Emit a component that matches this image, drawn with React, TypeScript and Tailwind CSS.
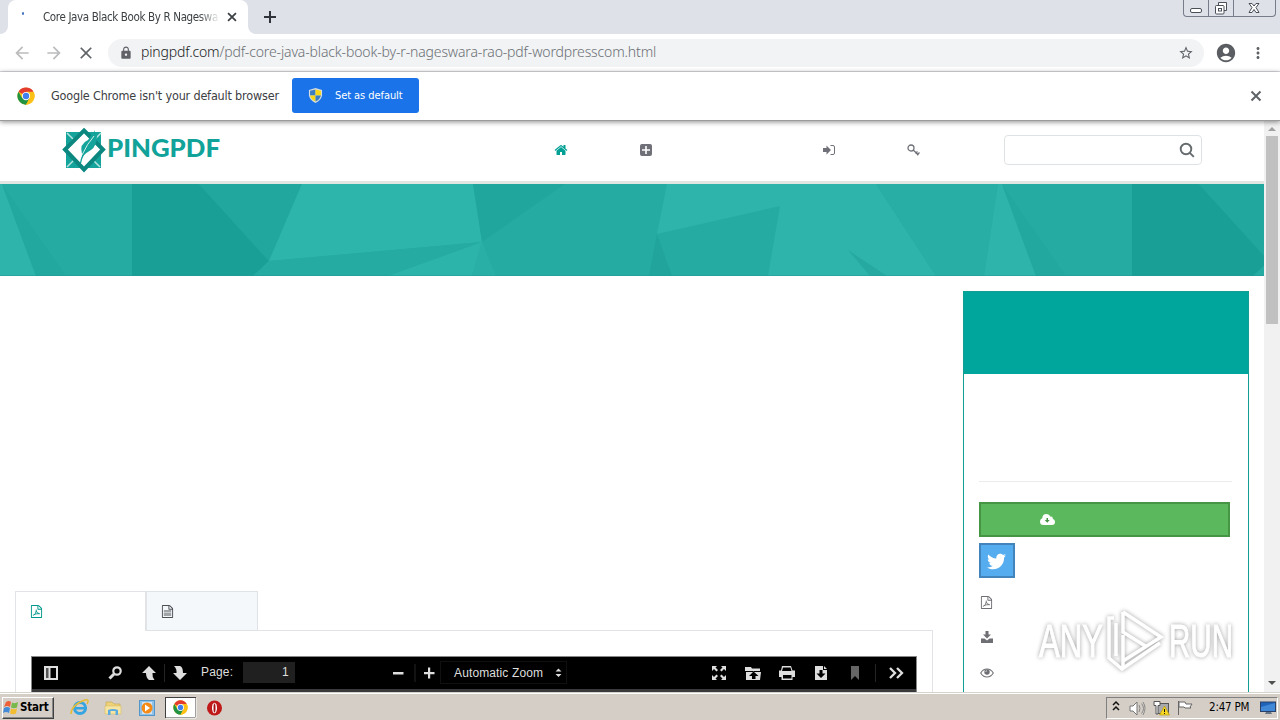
import React from 'react';
import { MdLock, MdStarBorder, MdAccountCircle, MdMoreVert, MdClose, MdArrowBack, MdArrowForward } from 'react-icons/md';
import { FaTwitter } from 'react-icons/fa';

const ui = "font-['DejaVu_Sans_Condensed','DejaVu_Sans',sans-serif] [font-stretch:condensed]";

type P = { d: string; className?: string };
const Glyph = ({ d, className }: P) => (
  <svg viewBox="0 0 1792 1792" className={className} fill="currentColor"><path d={d} /></svg>
);

const HOME = 'M1472 992v480q0 26-19 45t-45 19h-384v-384h-256v384h-384q-26 0-45-19t-19-45v-480q0-1 .5-3t.5-3l575-474 575 474q1 2 1 6zm223-69l-62 74q-8 9-21 11h-3q-13 0-21-7l-692-577-692 577q-12 8-24 7-13-2-21-11l-62-74q-8-10-7-23.5t11-21.5l719-599q32-26 76-26t76 26l244 204v-195q0-14 9-23t23-9h192q14 0 23 9t9 23v408l219 182q10 8 11 21.5t-7 23.5z';
const PAGE = 'M1596 380q28 28 48 76t20 88v1152q0 40-28 68t-68 28h-1344q-40 0-68-28t-28-68v-1600q0-40 28-68t68-28h896q40 0 88 20t76 48zm-444-244v376h376q-10-29-22-41l-313-313q-12-12-41-22zm384 1528v-1024h-416q-40 0-68-28t-28-68v-416h-768v1536h1280z';
const LINES = 'M384 800q0-32 32-32h960q32 0 32 32v64q0 32-32 32h-960q-32 0-32-32zM384 1056h1024v128h-1024zM384 1312h1024v128h-1024z';

const Pdf = ({ className }: { className: string }) => (
  <svg viewBox="0 0 1792 1792" className={className} fill="currentColor">
    <path d={PAGE} />
    <path d="M820 620q70 10 50 140-20 420-420 700M850 800q80 330 500 420M480 1360q350-200 820-170" fill="none" stroke="currentColor" strokeWidth="125" />
  </svg>
);

const Cross = ({ className }: { className: string }) => (
  <svg viewBox="0 0 16 16" className={className} fill="none" stroke="currentColor" strokeWidth="2"><path d="m3.500 3.500 9 9M12.500 3.500l-9 9" /></svg>
);

const ChromeLogo = ({ className }: { className: string }) => (
  <svg viewBox="0 0 48 48" className={className}>
    <circle cx="24" cy="24" r="23" fill="#fbc116" />
    <path d="M24 24 4.1 12.5A23 23 0 0 1 43.9 12.5L24 12.500Z" fill="#e33b2e" />
    <path d="M4.100 12.500A23 23 0 0 0 24 47L34 29.700 14 29.700Z" fill="#229342" />
    <path d="M24 13.500H44.400A23 23 0 0 1 24 47L33.500 29.500Z" fill="#fbc116" />
    <circle cx="24" cy="24" r="11" fill="#fff" />
    <circle cx="24" cy="24" r="8.500" fill="#4080ee" />
  </svg>
);

const Shield = () => (
  <svg viewBox="0 0 16 18" className="h-[17px] w-[15px]">
    <path d="M8 1 15 3V9Q14 14 8 17 2 14 1 9V3Z" fill="#d7dde0" />
    <path d="M8 2.500V9H2.200V4Z" fill="#3b7dc4" /><path d="M8 2.500V9h5.800V4Z" fill="#f7d716" />
    <path d="M2.200 9H8v6.500Q3.500 13.500 2.200 9Z" fill="#f7d716" /><path d="M13.800 9H8v6.500Q12.500 13.500 13.800 9Z" fill="#3b7dc4" />
  </svg>
);

function TabStrip() {
  return (
    <div className="flex h-[34px] shrink-0 items-start bg-[#dee1e8]">
      <div className="flex h-[34px] w-2 shrink-0 items-end bg-white"><div className="h-[34px] w-2 rounded-br-lg bg-[#dee1e8]" /></div>
      <div className="flex h-[34px] w-[240px] shrink-0 items-center rounded-t-lg bg-white">
        <div className="mb-2 ml-[14px] h-[3px] w-[2px] rounded bg-[#4a78c0]" />
        <div className={`${ui} ml-[19px] w-[177px] text-[11.500px] leading-[16px] tracking-[-0.36px] whitespace-nowrap text-[#3c4043] [mask-image:linear-gradient(to_right,#000_88%,transparent)]`}>
          Core Java Black Book By R Nageswa
        </div>
        <Cross className="ml-[5px] h-[14px] w-[14px] text-[#3c4043]" />
      </div>
      <div className="h-[34px] w-2 shrink-0 bg-white"><div className="h-[34px] w-2 rounded-bl-lg bg-[#dee1e8]" /></div>
      <svg viewBox="0 0 18 18" className="mt-2 ml-[5px] h-[18px] w-[18px]" stroke="#30343a" strokeWidth="2"><path d="M9 3v12M3 9h12" /></svg>
      <div className="mr-[4px] ml-auto flex h-[17px] w-[93px] rounded-b-[4px] border border-t-0 border-[#777c8a]">
        <svg viewBox="0 0 91 16" className="h-4 w-[91px]" fill="none" stroke="#4b5058">
          <path d="M24.500 0V16M49.500 0V16" stroke="#777c8a" />
          <rect x="6.500" y="8.500" width="11" height="4" rx="1.500" fill="#fff" />
          <path d="M34.500 5.500V2.500H42.500V10.500H40" fill="#fff" /><rect x="31.500" y="5.500" width="8.500" height="8.500" rx="1" fill="#fff" /><rect x="34.500" y="8.500" width="3" height="2.500" />
          <path d="M65 3.500h3l2 2.500 2-2.500h3l-3 4 3 5h-3l-2-3-2 3h-3l3-5Z" fill="#fff" />
        </svg>
      </div>
    </div>
  );
}

function Toolbar() {
  return (
    <div className="flex h-[38px] shrink-0 items-center border-b border-[#dadce0] bg-white">
      <MdArrowBack className="ml-3 h-5 w-5 text-[#babcbe]" />
      <MdArrowForward className="ml-3 h-5 w-5 text-[#babcbe]" />
      <MdClose className="ml-3 h-5 w-5 text-[#5f6368]" />
      <div className="ml-[12px] flex h-7 w-[1096px] items-center rounded-full bg-[#f1f3f4]">
        <MdLock className="ml-[11px] h-[14px] w-[14px] shrink-0 text-[#5f6368]" />
        <div className="-mt-[2px] ml-[8px] font-['Noto_Sans',sans-serif] text-[14px] leading-5 font-light tracking-[-0.143px] whitespace-nowrap text-[#6b6f74]">
          <span className="text-[#202124]">pingpdf.com</span>/pdf-core-java-black-book-by-r-nageswara-rao-pdf-wordpresscom.html
        </div>
        <MdStarBorder className="mr-[10px] ml-auto h-4 w-4 text-[#5f6368]" />
      </div>
      <MdAccountCircle className="ml-[11px] h-[22px] w-[22px] text-[#5a5d62]" />
      <MdMoreVert className="ml-[12px] h-[18px] w-[18px] text-[#5f6368]" />
    </div>
  );
}

function InfoBar() {
  return (
    <div className="z-10 flex h-[49px] shrink-0 items-center border-b border-[#9b9b9b] bg-white shadow-[0_1px_5px_rgba(0,0,0,0.45)]">
      <ChromeLogo className="ml-[17px] h-[18px] w-[18px]" />
      <div className={`${ui} ml-4 w-[229px] text-[12.500px] tracking-[-0.18px] whitespace-nowrap text-[#3c4043]`}>Google Chrome isn't your default browser</div>
      <div className={`${ui} mb-[2px] ml-[12px] flex h-[35px] w-[127px] items-center rounded-[3px] bg-[#1a73e8] text-[11px] tracking-[-0.07px] whitespace-nowrap text-white`}>
        <span className="mr-3 ml-4"><Shield /></span><span className="mt-[2px]">Set as default</span>
      </div>
      <Cross className="mr-[16px] ml-auto h-4 w-4 text-[#5f6368]" />
    </div>
  );
}

function SiteHeader() {
  return (
    <header className="flex h-[63px] shrink-0 items-center border-b-[3px] border-[#e2e6e3] bg-white pb-[3px]">
      <svg viewBox="0 0 160 46" className="ml-[62px] h-[46px] w-[160px] shrink-0">
        <rect x="4" y="5" width="35" height="36" fill="#14a49b" />
        <path d="M5 6l7 7M39 6l-7 7M5 40l7-7M38 40l-7-7" stroke="#b5e4df" strokeWidth="1.500" />
        <path d="M22 3.500 41 22.500 22 42.500 3 22.500Z" fill="#fff" stroke="#0c8780" strokeWidth="4" />
        <path d="M18.500 36Q20 27 29 16" fill="none" stroke="#14a49b" strokeWidth="1.400" />
        <path d="M20 27Q17 17 26 13L33 3Q31 10 35 8 35 19 29 23 25 25 20 30Z" fill="#14a49b" />
        <path d="M20 28Q25 17 32 9" fill="none" stroke="#d4efed" />
        <text x="45" y="30" fontFamily="Lato, sans-serif" fontWeight="900" fontSize="24.500" textLength="113" lengthAdjust="spacingAndGlyphs" fill="#11a399">PINGPDF</text>
      </svg>
      <nav className="ml-[332px] flex w-[366px] shrink-0 items-center text-[#707178]">
        <Glyph d={HOME} className="h-[14px] w-[14px] text-[#00a095]" />
        <svg viewBox="0 0 12 12" className="ml-[72px] h-3 w-3"><rect width="12" height="12" rx="2" fill="currentColor" /><path d="M6 2v8M2 6h8" stroke="#fff" strokeWidth="1.600" /></svg>
        <svg viewBox="0 0 12 12" className="ml-[171px] h-3 w-3"><path d="M0 4h3.500V1.500L8 6 3.500 10.500V8H0Z" fill="currentColor" /><path d="M7.500 1.500H10q1.500 0 1.500 1.500v6q0 1.500-1.500 1.500H7.500" fill="none" stroke="currentColor" /></svg>
        <svg viewBox="0 0 13 12" className="ml-[72px] h-3 w-[13px]" fill="none" stroke="currentColor" strokeWidth="1.300"><circle cx="4" cy="4" r="3" /><path d="M6.200 6 11.500 11M8.500 9.500l2-2M10 11l2.500-2.500" /></svg>
      </nav>
      <div className="ml-[84px] flex h-[30px] w-[198px] items-center justify-end rounded-[4px] border border-[#dfe2e4] pr-[6px]">
        <svg viewBox="0 0 16 16" className="h-4 w-4" fill="none" stroke="#666b6e" strokeWidth="1.900"><circle cx="7" cy="7" r="5.300" /><path d="m10.800 10.800 4 4" /></svg>
      </div>
    </header>
  );
}

const tile = (
  <>
    <path d="M-2 0H2L36 92H-16Z" fill="#2eb4aa" />
    <path d="M2 0 66 92H36Z" fill="#23a89f" />
    <path d="M132 0H199L269 77 253 92H132Z" fill="#1a9f96" />
    <path d="M199 0H302L269 77Z" fill="#22a79f" />
    <path d="M302 0H473L482 58 269 77Z" fill="#2eb5ab" />
    <path d="M269 77 482 58 388 92H253Z" fill="#26aba2" />
    <path d="M388 92 482 58 472 92Z" fill="#2db4aa" />
    <path d="M472 92 482 58 496 92Z" fill="#2aafa6" />
    <path d="M473 0H565L482 58Z" fill="#21a69d" />
    <path d="M667 0H876L936 92H768L780 22 657 50Z" fill="#2eb4ab" />
    <path d="M657 50 672 92H649Z" fill="#20a49b" />
    <path d="M848 66 887 92H870Z" fill="#26a9a0" />
    <path d="M876 0H998L984 92H936Z" fill="#29aea5" />
  </>
);

function Banner() {
  return (
    <div className="h-[92px] shrink-0 overflow-hidden bg-[#26aba2]">
      <svg viewBox="0 0 1264 92" className="h-[92px] w-[1264px]">{tile}<g transform="translate(1000)">{tile}</g><path d="M0 91.500H1264" stroke="#1e9b92" strokeOpacity=".5" /></svg>
    </div>
  );
}

function Viewer() {
  return (
    <div className="mt-[25px] ml-[15px] h-[50px] w-[886px] border border-b-0 border-[#888]">
      <div className="flex h-8 items-center bg-black font-['Liberation_Sans',sans-serif] text-[12px] text-[#dedede]">
        <svg viewBox="0 0 884 32" className="h-8 w-[884px]" fill="#dedede">
          <path fillRule="evenodd" d="M12 9h14v14H12ZM18.500 11V21H24V11Z" /><path d="M14 11h2.500v10H14Z" fill="#555" />
          <circle cx="85" cy="14" r="3.700" fill="none" stroke="#dedede" strokeWidth="2.200" /><path d="m82 17-4.500 4.500" stroke="#dedede" strokeWidth="3" />
          <path d="M117 9 124 16H120.500Q120 20 122.500 23H117Q114 21 114 16H110Z" />
          <path d="M148 23 155 16H151Q151 10 148 9H142Q145 12 144.500 16H141Z" />
          <path d="M132.500 7V25M383 7V25M843.500 7V25" stroke="#242424" />
          <rect x="211" y="5" width="52" height="21" fill="#202020" />
          <text x="169" y="19" fontSize="12" textLength="32">Page:</text>
          <text x="250" y="19" fontSize="12">1</text>
          <path d="M361 15h10.500v2.500H361ZM392 15h10.500v2.300H392ZM396 10.500h2.200v11H396Z" />
          <rect x="408.500" y="4.500" width="126" height="22" fill="none" stroke="#101010" />
          <text x="422" y="20" fontSize="12" textLength="89">Automatic Zoom</text>
          <path d="M523.500 14.500 526.500 11.500 529.500 14.500ZM523.500 17 526.500 20 529.500 17Z" />
          <path d="M680 9h5l-1.500 1.500 2.500 2.500-1.500 1.500-2.500-2.500L680 14ZM694 9h-5l1.500 1.500L688 13l1.500 1.500 2.500-2.500 2 2ZM680 23h5l-1.500-1.500L686 19l-1.500-1.500L682 20l-2-2ZM694 23h-5l1.500-1.500L688 19l1.500-1.500L692 20l2-2Z" />
          <path fillRule="evenodd" d="M713 10h6l1 1.500h8V14H713ZM714 15h15l-1 8H714ZM721.500 14.500 717 19h3v3h3.500v-3h3Z" />
          <path d="M750 9h9l1.500 4.500H763V20h-2.500v3h-11v-3H747v-6.500h2ZM751 10.500 750 14h9.500l-1-3.500ZM751 18v3.500h8.500V18Z" fillRule="evenodd" />
          <path fillRule="evenodd" d="M783 9h8v4h4v10H783ZM792 9l3 3h-3ZM787.500 13h3v3.500h3L789 21l-4.500-4.500h3Z" />
          <path d="M819 9h8v14l-4-4-4 4Z" fill="#666" />
          <path d="m858 11 5 5-5 5M865 11l5 5-5 5" fill="none" stroke="#dedede" strokeWidth="2.300" />
        </svg>
      </div>
      <div className="h-5 bg-[#3a3a3a]" />
    </div>
  );
}

function DocumentColumn() {
  return (
    <div className="ml-[15px] flex w-[918px] shrink-0 flex-col pt-[315px]">
      <div className="z-[1] -mb-px flex h-10">
        <div className="flex h-10 w-[132px] items-center border-t border-r-2 border-l border-[#e1e3e6] bg-white pl-[14px]"><Pdf className="h-[13px] w-[13px] text-[#00978c]" /></div>
        <div className="flex h-10 w-[111px] items-center border border-l-0 border-[#dfe3e7] bg-[#f4f8fb] pl-[14px]">
          <svg viewBox="0 0 1792 1792" className="h-[13px] w-[13px]" fill="#4c5055"><path d={PAGE} /><path d={LINES} /></svg>
        </div>
      </div>
      <div className="h-[80px] border border-[#e1e3e6]"><Viewer /></div>
    </div>
  );
}

function Watermark() {
  return (
    <svg viewBox="0 0 230 76" className="pointer-events-none absolute top-[604px] left-[1030px] z-30 h-[76px] w-[230px] drop-shadow-[0_0_2px_rgba(0,0,0,0.38)]" fill="#fff">
      <g fontFamily="Liberation Sans, sans-serif" fontSize="46" fill="#fff" stroke="#fff" strokeWidth="1">
        <text x="9" y="53" textLength="64" lengthAdjust="spacingAndGlyphs">ANY</text>
        <text x="139" y="53" textLength="64" lengthAdjust="spacingAndGlyphs">RUN</text>
      </g>
      <path d="M93 8 131 33 93 57M93 8V28L117 43M84 14H79V54L92 65 130 39M86 19V52M93 31V63" fill="none" stroke="#fff" strokeWidth="3.500" />
    </svg>
  );
}

function Sidebar() {
  return (
    <aside className="mt-[15px] ml-[30px] h-[401px] w-[286px] shrink-0 border border-b-0 border-[#10a093]">
      <div className="h-[82px] bg-[#00a59b]" />
      <div className="flex flex-col px-[15px] text-[#6e6f74]">
        <div className="mt-[107px] h-px w-[253px] bg-[#e9ebed]" />
        <div className="mt-5 flex h-[35px] w-[251px] items-center border-2 border-[#459545] bg-[#5cb85c] pl-[59px]">
          <svg viewBox="0 0 15 11" className="h-[11px] w-[15px]"><path d="M3.500 11Q0 11 0 7.500 0 5 2.200 4.300 2.500 0 6.500 0 9.500 0 10.500 2.700 12.500 2 13 5 15 5.600 15 8 15 11 12 11Z" fill="#fff" /><path d="M6.500 4h1.500v2h1.700L7.200 8.700 4.800 6h1.700Z" fill="#459545" /></svg>
        </div>
        <div className="mt-[6px] flex h-[35px] w-9 items-center justify-center border-2 border-[#4384bd] bg-[#55acee]"><FaTwitter className="mt-[2px] mr-[2px] h-[19px] w-[19px] text-white" /></div>
        <Pdf className="mt-[18px] ml-px h-[13px] w-[13px]" />
        <svg viewBox="0 0 12 12" className="mt-[22px] ml-[2px] h-3 w-3" fill="currentColor"><path d="M4.500 0h3v3.500H10L6 7.500 2 3.500h2.500ZM0 7.500h3.500L6 9.500l2.500-2H12V12H0Z" /></svg>
        <svg viewBox="0 0 14 10" className="mt-[25px] ml-[1px] h-[10px] w-[14px]" fill="none" stroke="currentColor"><path d="M.7 5Q3 1 7 1T13.300 5Q11 9 7 9T.7 5Z" strokeWidth="1.100" /><circle cx="7" cy="4" r="2.700" fill="currentColor" stroke="none" /><path d="M5.700 4Q5.700 2.700 7 2.700" stroke="#fff" strokeWidth=".6" /></svg>
      </div>
    </aside>
  );
}

function Scrollbar() {
  return (
    <div className="flex w-4 shrink-0 flex-col items-center bg-[#f1f1f1]">
      <svg viewBox="0 0 16 15" className="h-[15px] w-4"><path d="M4 10 8 6l4 4Z" fill="#a0a0a0" /></svg>
      <div className="h-[188px] w-3 bg-[#c1c1c1]" />
      <svg viewBox="0 0 16 17" className="mt-auto h-[17px] w-4"><path d="M4 6h8l-4 4Z" fill="#505050" /></svg>
    </div>
  );
}

function Taskbar() {
  return (
    <div className={`${ui} z-20 flex h-7 shrink-0 items-center border-t border-[#d6d3ca] bg-[#d5cec7] shadow-[inset_0_1px_0_#fff]`}>
      <div className="mt-[2px] ml-[2px] flex h-[22px] w-[52px] items-center border border-t-white border-r-[#404040] border-b-[#404040] border-l-white text-[11.500px] font-bold text-black shadow-[inset_-1px_-1px_0_#888]">
        <svg viewBox="0 0 16 16" className="mr-px h-4 w-4 shrink-0"><path d="M3 2Q6 0 8 2L7 7Q4 5 1 7Z" fill="#ed6038" /><path d="M9 2.500Q12 4 15 2L14 7.500Q11 9 8 7.500Z" fill="#79b84a" /><path d="M1 8Q4 6 7 8L6 13Q3 11 0 13Z" fill="#438bd6" /><path d="M8 8.500Q11 10 14 8.500L13 13.500Q10 15 7 13.500Z" fill="#f3bd31" /></svg>
        <span className="tracking-[-0.2px]">Start</span>
      </div>
      <svg viewBox="0 0 170 28" className="ml-[10px] h-7 w-[170px] shrink-0">
        <circle cx="16" cy="15" r="5.500" fill="none" stroke="#34a5e1" strokeWidth="3" /><path d="M11 14h12v2.500H11Z" fill="#34a5e1" /><path d="M7 21Q7 12 21 7q5-1 2 4" fill="none" stroke="#e3bb39" strokeWidth="1.500" />
        <path d="M42 9h6l2 2h6v5H42Z" fill="#eed277" stroke="#c6a956" strokeWidth=".7" /><path d="M41 13h16v8H41Z" fill="#f6e5a1" stroke="#d9bd68" strokeWidth=".6" /><path d="M44 22V17q5-2 10 0v5h-2.500v-4h-5v4Z" fill="#5cabe0" />
        <rect x="75.500" y="7.500" width="15" height="15" fill="#8fc2e8" stroke="#5596ca" /><rect x="78" y="9" width="10" height="12" fill="#d2e4f2" /><circle cx="83" cy="15" r="5.500" fill="#f58a17" /><path d="m81 11.500 5 3.500-5 3.500Z" fill="#fff" />
        <rect x="101.500" y="4.500" width="30" height="20" fill="#fff" stroke="#404040" /><path d="M102 25h30V5" fill="none" stroke="#fff" />
        <circle cx="150.500" cy="15" r="7.500" fill="#c01919" /><ellipse cx="150.500" cy="15" rx="2.500" ry="5.300" fill="#fff" /><ellipse cx="150.500" cy="15" rx="1" ry="4.500" fill="#a50f13" />
        <svg x="109" y="7" width="15" height="15"><ChromeLogo className="h-[15px] w-[15px]" /></svg>
      </svg>
      <div className="mt-[3px] mr-[2px] ml-auto flex h-[22px] w-[172px] items-center border border-t-[#808080] border-r-white border-b-white border-l-[#808080]">
        <svg viewBox="0 0 90 20" className="h-5 w-[90px] shrink-0" fill="none" stroke="#111">
          <path d="m6 7 3-3 3 3M6 12l3-3 3 3" strokeWidth="1.500" />
          <path d="M23 8h3l4-4v13l-4-4h-3Z" fill="#fff" stroke="#777" /><path d="M32 7q2 3 0 7M34.500 5.500q4 5 0 10M36 4q4 6 0 13" stroke="#888" />
          <rect x="50.500" y="5.500" width="11" height="10" fill="#a8aaae" stroke="#555" /><path d="M47 3.500h6v4h-2V16h-2V7.500h-2Z" fill="#fff" stroke="#555" /><path d="m57.500 8 5 9h-10Z" fill="#f8d820" stroke="#b79b12" strokeWidth=".7" /><path d="M57.500 11v3M57.500 15v1" />
          <path d="M71.500 3v14M72 4h6l1 2h6l-2 3 1 1h-6l-1-1h-5Z" fill="#fff" stroke="#666" />
        </svg>
        <span className="ml-[12px] w-[40px] text-[11.500px] tracking-[-0.2px] whitespace-nowrap text-black">2:47 PM</span>
        <svg viewBox="0 0 16 14" className="ml-[11px] h-[14px] w-4 shrink-0"><rect x=".5" y="1" width="15" height="9.500" fill="#2063ba" stroke="#294168" /><path d="M1 6 15 2V10H1Z" fill="#4188d6" /><path d="M6 11h5l1 2H5Z" fill="#687585" /></svg>
      </div>
    </div>
  );
}

export default function App() {
  return (
    <div className="relative flex h-[720px] w-[1280px] flex-col overflow-hidden bg-white">
      <TabStrip />
      <Toolbar />
      <InfoBar />
      <div className="flex h-[571px] shrink-0 overflow-hidden">
        <main className="flex w-[1264px] shrink-0 flex-col overflow-hidden bg-white">
          <SiteHeader />
          <Banner />
          <div className="flex h-[416px] shrink-0 overflow-hidden"><DocumentColumn /><Sidebar /></div>
        </main>
        <Scrollbar />
      </div>
      <Taskbar />
      <Watermark />
    </div>
  );
}
